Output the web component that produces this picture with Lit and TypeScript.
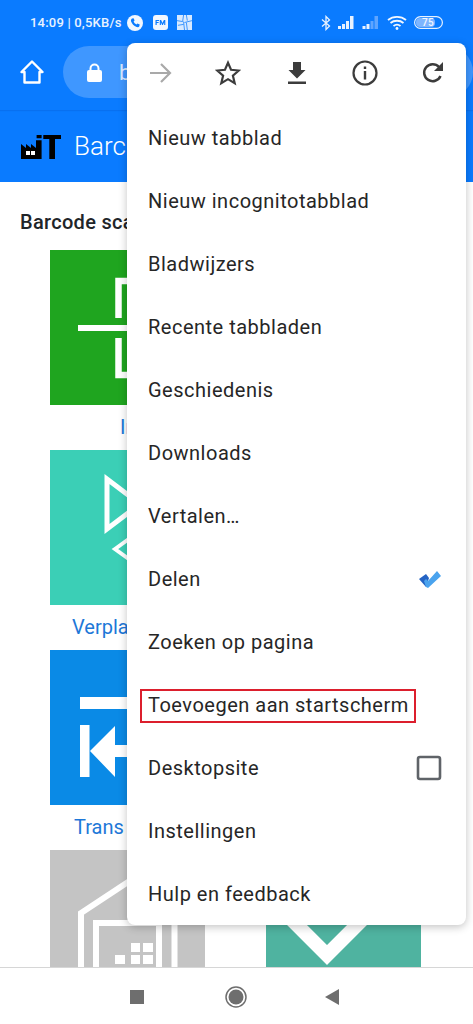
import { LitElement, html, css, svg } from "lit";
import { customElement } from "lit/decorators.js";

const menu = [
  "Nieuw tabblad",
  "Nieuw incognitotabblad",
  "Bladwijzers",
  "Recente tabbladen",
  "Geschiedenis",
  "Downloads",
  "Vertalen…",
  "Delen",
  "Zoeken op pagina",
  "Toevoegen aan startscherm",
  "Desktopsite",
  "Instellingen",
  "Hulp en feedback",
];

const scanIcon = svg`<path d="M28 78H150" stroke="#fff" stroke-width="6" fill="none"/><path d="M125 31H68.500V68M68.500 88V125H125" stroke="#fff" stroke-width="6.500" fill="none"/>`;
const moveIcon = svg`<path d="M57 29V79L90 54Z" stroke="#fff" stroke-width="5" fill="none"/><path d="M65 99L90 81L115 99L90 117Z" stroke="#fff" stroke-width="4" fill="none"/>`;
const transferIcon = svg`<path d="M30 47H125V59H30ZM30 75H39.500V127H30ZM40 101L65 76V95H125V107H65V127Z" fill="#fff"/>`;
const stockIcon = svg`<path d="M31 117V63L78 32L124.500 60V117" stroke="#fff" stroke-width="6" fill="none"/><path d="M46 117V73H109V117" stroke="#fff" stroke-width="6" fill="none"/><path d="M81 93h9v9h-9zM93 93h10v9h-10zM81 105h9v9h-9zM93 105h10v9h-10zM65 105h10v9h-10z" fill="#fff"/>`;
const checkIcon = svg`<path d="M20 64L61 105L110 56" stroke="#fff" stroke-width="14" fill="none"/>`;

const rows = [
  { left: { color: "#1fa51f", icon: scanIcon, label: "In", inset: 70 }, right: { color: "#1fa51f", icon: null, label: "", inset: 0 } },
  { left: { color: "#3bcfb6", icon: moveIcon, label: "Verpla", inset: 22 }, right: { color: "#3bcfb6", icon: null, label: "", inset: 0 } },
  { left: { color: "#0a8ae6", icon: transferIcon, label: "Trans", inset: 24 }, right: { color: "#0a8ae6", icon: null, label: "", inset: 0 } },
  { left: { color: "#c4c4c4", icon: stockIcon, label: "", inset: 0 }, right: { color: "#4fb3a0", icon: checkIcon, label: "", inset: 0 } },
];

@customElement("app-root")
export class AppRoot extends LitElement {
  static styles = css`
    :host {
      display: block;
      width: 473px;
      height: 1024px;
      position: relative;
      overflow: hidden;
      background: #fff;
      font-family: Roboto, "Noto Sans", sans-serif;
    }
    .page { display: flex; flex-direction: column; height: 1024px; }
    .chrome { background: #0a7bff; height: 110px; flex: none; display: flex; flex-direction: column; box-shadow: 0 1px 1px rgba(0,50,150,.14); position: relative; }
    .status { height: 43px; display: flex; align-items: center; padding: 2px 30px 0; gap: 5px; color: #e8f2ff; font-size: 13px; font-weight: 500; box-sizing: border-box; letter-spacing: .2px; flex: none; }
    .status .right { margin-left: auto; display: flex; align-items: center; gap: 5px; }
    .status .clock { white-space: nowrap; }
    .toolbar { flex: 1; display: flex; align-items: center; padding: 0 0 9px 20px; gap: 19px; }
    .url { flex: 1; height: 52px; border-radius: 26px; background: #3f97ff; display: flex; align-items: center; padding-left: 24px; gap: 17px; color: #d8e9ff; font-size: 22px; }
    .band { background: #0a7bff; height: 72px; flex: none; display: flex; align-items: center; padding-left: 21px; gap: 13px; color: #fff; font-size: 26px; font-weight: 300; box-sizing: border-box; }
    .main { flex: 1; min-height: 0; overflow: hidden; }
    h1 { margin: 0; font-size: 20px; font-weight: 500; color: #212529; padding: 27px 0 0 20px; height: 68px; box-sizing: border-box; line-height: 26px; letter-spacing: .3px; }
    .grid { display: grid; grid-template-columns: 155px 155px; column-gap: 61px; padding-left: 50px; }
    .cell { height: 200px; display: flex; flex-direction: column; align-items: flex-start; }
    .tile { width: 155px; height: 155px; flex: none; display: block; }
    .label { color: #1e78d8; font-size: 20px; line-height: 24px; margin-top: 10px; white-space: nowrap; }
    .nav { flex: none; height: 57px; background: #fff; border-top: 1px solid #d6d6d6; box-sizing: border-box; display: flex; align-items: center; padding: 2px 0 0 130px; position: relative; }
    .nav-home { margin-left: 81px; }
    .nav-back { margin-left: 78px; }
    .menu { position: absolute; left: 127px; top: 43px; width: 339px; height: 882px; background: #fff; border-radius: 8px; box-shadow: 0 2px 9px rgba(0,0,0,.24); display: flex; flex-direction: column; }
    .icons { height: 63px; flex: none; display: flex; align-items: center; justify-content: space-between; padding: 0 21px 3px; box-sizing: border-box; }
    .row { height: 63px; flex: none; display: flex; align-items: center; justify-content: space-between; padding: 0 24px 0 21px; color: #262626; font-size: 20px; position: relative; letter-spacing: .5px; }
    .hl { position: relative; }
    .hl::after { content: ""; position: absolute; left: -8px; right: -7px; top: -4px; bottom: -6px; border: 2px solid #dc1f2d; }
    svg { display: block; }
  `;

  private rowEnd(label: string) {
    if (label === "Delen")
      return html`<svg width="24" height="20" viewBox="0 0 24 20"><path d="M1 10L8 5L11 9L8 18Z" fill="#2463c4"/><path d="M8 18L6 12L8 10L10 12L19 2L23 7L10 19Z" fill="#4aa3ee"/></svg>`;
    if (label === "Desktopsite")
      return html`<svg width="26" height="26" viewBox="0 0 26 26"><rect x="2" y="2" width="22" height="22" rx="2" fill="none" stroke="#5f6368" stroke-width="2.600"/></svg>`;
    return null;
  }

  render() {
    return html`
      <div class="page">
        <div class="chrome">
          <div class="status">
            <span class="clock">14:09 | 0,5KB/s</span>
            <svg width="16" height="16" viewBox="0 0 16 16"><circle cx="8" cy="8" r="8" fill="#f2f7ff"/><path d="M5 3.600L6.600 3.200L7.600 5.600L6.600 6.600C7 7.800 8 8.900 9.400 9.500L10.400 8.500L12.700 9.600L12.300 11.200C11.800 12.200 10.600 12.300 9.600 12C6.800 11 4.900 8.900 4 6.300C3.800 5.200 4.200 4.200 5 3.600Z" fill="#0a7bff"/></svg>
            <svg style="margin-left:5px" width="15" height="15" viewBox="0 0 15 15"><rect width="15" height="15" rx="3" fill="#f2f7ff"/><path d="M2.500 5H6V6H3.700V7H5.600V8H3.700V10H2.500ZM6.800 5H8.100L9.500 8L10.900 5H12.300V10H11.200V7.200L9.900 10H9.100L7.900 7.200V10H6.800Z" fill="#0a7bff"/></svg>
            <svg style="margin-left:4px" width="15" height="15" viewBox="0 0 16 16"><rect width="16" height="16" fill="#d7e9ff"/><path d="M0 6L6 7L7 0M7 7L8 16M8 8L16 6M10 0L11 6M10 8L11 16M1 11L7 10" stroke="#0a7bff" stroke-width=".8" fill="none"/></svg>
            <div class="right">
              <svg width="10" height="16" viewBox="0 0 10 16"><path d="M1 4.500L8.500 11L5 14.500V1.500L8.500 5L1 11.500" stroke="#e8f2ff" stroke-width="1.300" fill="none"/></svg>
              <svg style="margin-left:2px" width="17" height="13" viewBox="0 0 17 13"><path d="M0 10h3v3H0zM4 8h3v5H4zM8 5h3v8H8zM12 0h3.500v13H12z" fill="#e8f2ff"/></svg>
              <svg style="margin-left:2px" width="18" height="13" viewBox="0 0 17 13"><path d="M0 10h3v3H0zM4 8h3v5H4z" fill="#e8f2ff"/><path d="M8 5h3v8H8zM12 0h3.500v13H12z" fill="#5fa5ff"/></svg>
              <svg style="margin-left:2px" width="20" height="15" viewBox="0 0 20 15"><path d="M1 5C6 .8 14 .8 19 5M3.500 8C7 5 13 5 16.500 8M6.500 11C8.500 9.400 11.500 9.400 13.500 11" stroke="#f2f7ff" stroke-width="1.800" fill="none"/><circle cx="10" cy="13.500" r="1.400" fill="#f2f7ff"/></svg>
              <svg style="margin-left:2px" width="29" height="13" viewBox="0 0 29 13"><rect x=".6" y=".6" width="27.800" height="11.800" rx="5.900" fill="none" stroke="#e8f2ff" stroke-width="1.200"/><rect x="2" y="2" width="19" height="9" rx="4" fill="#7db5ff"/><text x="14" y="10" text-anchor="middle" font-family="Roboto" font-size="10" font-weight="500" fill="#f2f7ff">75</text></svg>
            </div>
          </div>
          <div class="toolbar">
            <svg width="24" height="24" viewBox="0 0 24 24"><path d="M1.500 12L12 1.500L22.500 12H19.500V22.500H4.500V12Z" fill="none" stroke="#fff" stroke-width="2.400" stroke-linejoin="round"/></svg>
            <div class="url">
              <svg width="15" height="19" viewBox="0 0 15 19"><path d="M3.500 8V5.500a4 4 0 0 1 8 0V8" fill="none" stroke="#fff" stroke-width="2"/><rect x="0" y="7" width="15" height="12" rx="2" fill="#fff"/></svg>
              <span>b</span>
            </div>
          </div>
        </div>
        <div class="band">
          <svg width="40" height="25" viewBox="0 0 40 25"><path d="M0 25V10L5 14V10L10 14V10L15 14V6.300H20.600V25Z" fill="#000"/><path d="M5 17h4v4H5zM10 17h4v4h-4z" fill="#fff"/><path d="M15.600 1h5v3.300h-5zM22.300 1H40V5H34V25H28.300V5H22.300Z" fill="#000"/></svg>
          <span>Barc</span>
        </div>
        <div class="main">
          <h1>Barcode sca</h1>
          <div class="grid">
            ${rows.flatMap((r) => [r.left, r.right]).map(
              (c) => html`<div class="cell">
                <svg class="tile" viewBox="0 0 155 155">
                  <rect width="155" height="155" fill=${c.color} />
                  ${c.icon}
                </svg>
                ${c.label ? html`<div class="label" style="margin-left:${c.inset}px">${c.label}</div>` : null}
              </div>`
            )}
          </div>
        </div>
        <div class="nav">
          <svg width="14" height="14" viewBox="0 0 14 14"><rect width="14" height="14" fill="#6e6e6e"/></svg>
          <svg class="nav-home" width="22" height="22" viewBox="0 0 22 22"><circle cx="11" cy="11" r="10" fill="none" stroke="#6e6e6e" stroke-width="1.500"/><circle cx="11" cy="11" r="7.500" fill="#6e6e6e"/></svg>
          <svg class="nav-back" width="14" height="16" viewBox="0 0 14 16"><path d="M14 0V16L0 8Z" fill="#6e6e6e"/></svg>
        </div>
      </div>
      <div class="menu">
        <div class="icons">
          <svg width="24" height="24" viewBox="0 0 24 24"><path d="M2 12H22M13 3L22 12L13 21" fill="none" stroke="#a9a9a9" stroke-width="2.200"/></svg>
          <svg width="26" height="26" viewBox="0 0 24 24"><path d="M12 2.500L14.800 9L22 9.700L16.500 14.400L18.200 21.500L12 17.700L5.800 21.500L7.500 14.400L2 9.700L9.200 9Z" fill="none" stroke="#3c3c3c" stroke-width="2"/></svg>
          <svg width="24" height="24" viewBox="0 0 24 24"><path d="M8 1H16V9H20.500L12 17.500L3.500 9H8ZM3 20.500H21V23H3Z" fill="#3c3c3c"/></svg>
          <svg width="26" height="26" viewBox="0 0 26 26"><circle cx="13" cy="13" r="11.500" fill="none" stroke="#3c3c3c" stroke-width="2.200"/><path d="M11.800 11H14.200V19.500H11.800ZM11.800 6.500H14.200V8.900H11.800Z" fill="#3c3c3c"/></svg>
          <svg width="24" height="24" viewBox="0 0 24 24"><path d="M19.500 15A8.500 8.500 0 1 1 18 6" fill="none" stroke="#3c3c3c" stroke-width="2.500"/><path d="M22 1V10H13Z" fill="#3c3c3c"/></svg>
        </div>
        ${menu.map(
          (m) => html`<div class="row">
            <span class=${m === "Toevoegen aan startscherm" ? "hl" : ""}>${m}</span>
            ${this.rowEnd(m)}
          </div>`
        )}
      </div>
    `;
  }
}
